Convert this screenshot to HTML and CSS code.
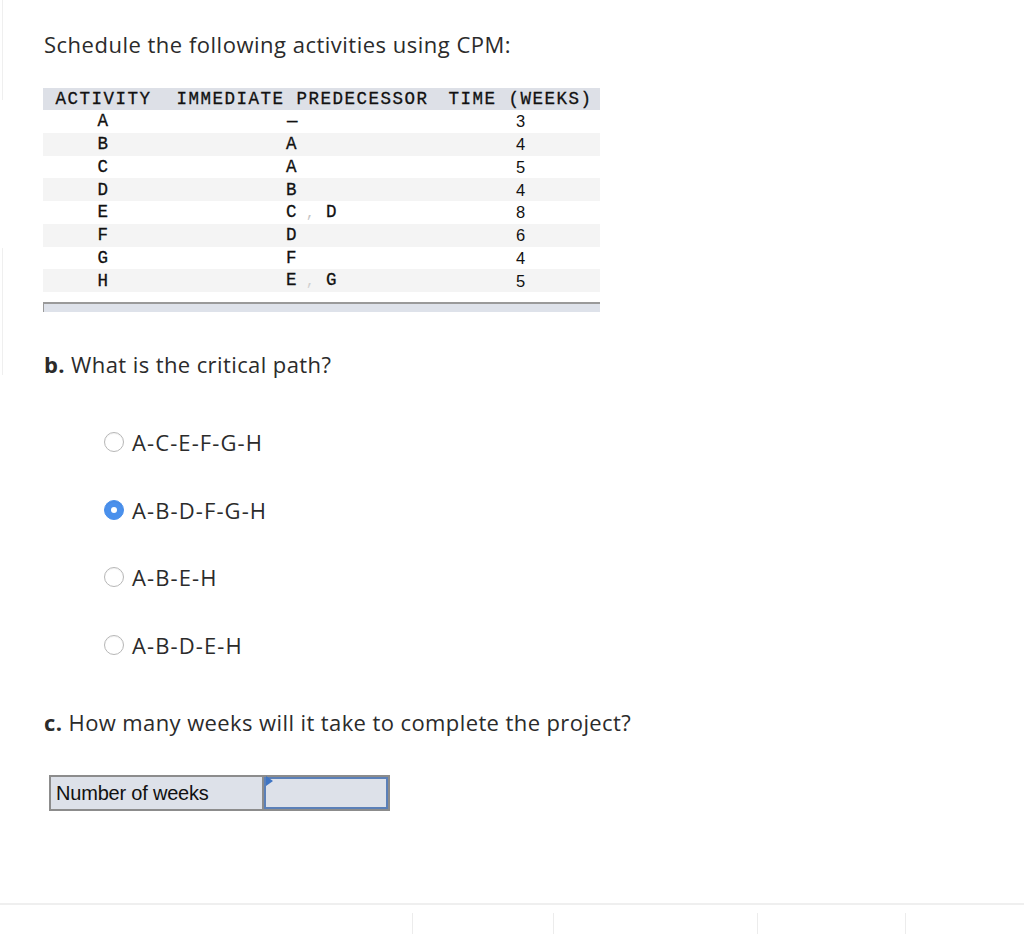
FILE: index.html
```html
<!DOCTYPE html>
<html>
<head>
<meta charset="utf-8">
<link rel="stylesheet" href="styles.css">
</head>
<body>
<div class="edge edge-top"></div>
<div class="edge edge-mid"></div>
<main class="page">
  <p class="title">Schedule the following activities using CPM:</p>

  <div class="cpm">
    <div class="row head">
      <div class="c1">ACTIVITY</div>
      <div class="c2 hc">IMMEDIATE PREDECESSOR</div>
      <div class="c3 hc">TIME (WEEKS)</div>
    </div>
    <div class="row"><div class="c1">A</div><div class="c2 dash">—</div><div class="c3">3</div></div>
    <div class="row alt"><div class="c1">B</div><div class="c2">A</div><div class="c3">4</div></div>
    <div class="row"><div class="c1">C</div><div class="c2">A</div><div class="c3">5</div></div>
    <div class="row alt"><div class="c1">D</div><div class="c2">B</div><div class="c3">4</div></div>
    <div class="row"><div class="c1">E</div><div class="c2">C<span class="comma">,</span>D</div><div class="c3">8</div></div>
    <div class="row alt"><div class="c1">F</div><div class="c2">D</div><div class="c3">6</div></div>
    <div class="row"><div class="c1">G</div><div class="c2">F</div><div class="c3">4</div></div>
    <div class="row alt"><div class="c1">H</div><div class="c2">E<span class="comma gap">,</span>G</div><div class="c3">5</div></div>
  </div>
  <div class="hbar"></div>

  <p class="question"><b>b.</b> What is the critical path?</p>

  <ul class="options">
    <li class="opt"><span class="radio"></span><span>A-C-E-F-G-H</span></li>
    <li class="opt"><span class="radio on"></span><span>A-B-D-F-G-H</span></li>
    <li class="opt"><span class="radio"></span><span>A-B-E-H</span></li>
    <li class="opt"><span class="radio"></span><span>A-B-D-E-H</span></li>
  </ul>

  <p class="question q2"><b>c.</b> How many weeks will it take to complete the project?</p>

  <div class="answer">
    <div class="label">Number of weeks</div>
    <div class="field"><span class="flag"></span></div>
  </div>
</main>
<footer class="foot">
  <span class="tick t1"></span><span class="tick t2"></span><span class="tick t3"></span><span class="tick t4"></span>
</footer>
</body>
</html>
```

FILE: styles.css
```css
* { box-sizing: border-box; }
html, body { margin: 0; padding: 0; background: #fff; }
body {
  width: 1024px;
  height: 934px;
  position: relative;
  overflow: hidden;
  font-family: "Open Sans", Lato, sans-serif;
  color: #2b2b2b;
}
.edge {
  position: absolute;
  left: 0;
  width: 3px;
  border-right: 1px solid #efefef;
}
.edge-top { top: 0; height: 100px; }
.edge-mid { top: 248px; height: 127px; }

.page {
  padding: 29px 0 0 43px;
}
.title {
  margin: 0 0 0 1px;
  font-size: 22px;
  line-height: 30px;
  letter-spacing: 0.5px;
}

.cpm {
  margin-top: 29px;
  width: 557px;
  font-family: "Liberation Mono", "DejaVu Sans Mono", monospace;
  font-size: 17.5px;
  letter-spacing: 1.5px;
  color: #111;
  -webkit-text-stroke: 0.3px #111;
}
.row {
  display: grid;
  grid-template-columns: 121px 277px 159px;
  height: 22.75px;
  align-items: center;
  line-height: 20px;
}
.row.head { background: #dde0e7; height: 22px; }
.row.alt { background: #f4f4f4; }
.c1 { text-align: center; }
.c2 { padding-left: 122px; }
.c2.hc, .c3.hc { text-align: center; padding-left: 0; }
.c2.dash { padding-left: 123px; }
.c3 {
  text-align: center;
  font-family: "Liberation Sans", Arial, sans-serif;
  font-size: 16.5px;
  letter-spacing: 0;
  -webkit-text-stroke: 0;
}
.c3.hc {
  font-family: "Liberation Mono", "DejaVu Sans Mono", monospace;
  font-size: 17.5px;
  letter-spacing: 1.5px;
  -webkit-text-stroke: 0.3px #111;
}
.comma {
  color: #c4c4c4;
  -webkit-text-stroke: 0;
  font-size: 14px;
  margin: 0 10px 0 8px;
}
.comma.gap { color: #cfcfcf; }

.hbar {
  margin-top: 10px;
  width: 557px;
  height: 10px;
  background: #dee2ea;
  border-top: 2px solid #9a9a9a;
  border-left: 1px solid #9a9a9a;
}

.question {
  margin: 37px 0 0 1px;
  font-size: 22px;
  line-height: 30px;
  letter-spacing: 0.4px;
}
.question b { font-weight: 700; }

.options {
  list-style: none;
  margin: 48px 0 0 0;
  padding: 0 0 0 61px;
}
.opt {
  display: flex;
  align-items: center;
  gap: 8px;
  height: 30px;
  margin-bottom: 37.5px;
  font-size: 22px;
  letter-spacing: 1.1px;
}
.radio {
  width: 20px;
  height: 20px;
  border-radius: 50%;
  border: 1px solid #b7b7b7;
  background: #fff;
  box-shadow: inset 0 1px 1px rgba(0,0,0,0.05);
  position: relative;
  flex: none;
}
.radio.on {
  background: #4a90ec;
  border-color: #4a90ec;
}
.radio.on::after {
  content: "";
  position: absolute;
  left: 6px;
  top: 6px;
  width: 6px;
  height: 6px;
  border-radius: 50%;
  background: #fff;
}

.q2 { margin-top: 47.5px; }

.answer {
  margin: 38px 0 0 6px;
  display: flex;
  width: 341px;
  height: 36px;
  border: 2px solid #8c8c8c;
  background: #dde1e9;
}
.label {
  width: 213px;
  border-right: 2px solid #8c8c8c;
  font-family: "Liberation Sans", Arial, sans-serif;
  font-size: 20px;
  letter-spacing: -0.2px;
  line-height: 32px;
  padding-left: 5px;
  color: #111;
}
.field {
  flex: 1;
  border: 2px solid #5b80b8;
  position: relative;
}
.flag {
  position: absolute;
  left: 0;
  width: 0;
  height: 0;
  border-top: 5px solid transparent;
  border-bottom: 5px solid transparent;
  border-left: 7px solid #3f75c4;
  top: -3px;
}

.foot {
  position: absolute;
  left: 0;
  right: 0;
  top: 903px;
  height: 31px;
  border-top: 2px solid #efefef;
}
.tick {
  position: absolute;
  top: 8px;
  bottom: 0;
  width: 1px;
  background: #ececec;
}
.t1 { left: 412px; }
.t2 { left: 553px; }
.t3 { left: 757px; }
.t4 { left: 905px; }
```
